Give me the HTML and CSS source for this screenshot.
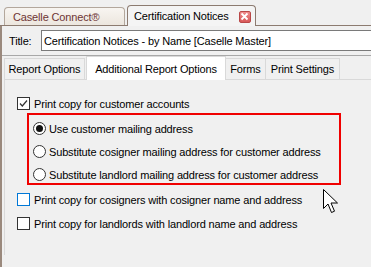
FILE: index.html
```html
<!DOCTYPE html>
<html lang="en">
<head>
  <meta charset="UTF-8" />
  <title>Certification Notices</title>
  <link rel="stylesheet" href="styles.css">
</head>
<body>
  <div class="doc-tabs">
    <div class="doc-tab">Caselle Connect®</div>
    <div class="doc-tab active">
      Certification Notices
      <span class="close-btn">
        <svg width="9" height="9" viewBox="0 0 9 9"><path d="M1.5 1.5 L7.5 7.5 M7.5 1.5 L1.5 7.5" stroke="#fff" stroke-width="1.8" /></svg>
      </span>
    </div>
  </div>

  <div class="doc-body">
    <div class="title-row">
      <span class="title-label">Title:</span>
      <div class="title-input">Certification Notices - by Name [Caselle Master]</div>
    </div>

    <div class="sub-tabs">
      <div class="sub-tab tab-report">Report Options</div>
      <div class="sub-tab tab-additional active">Additional Report Options</div>
      <div class="sub-tab tab-forms">Forms</div>
      <div class="sub-tab tab-print">Print Settings</div>
    </div>

    <div class="tab-panel">
      <div class="option-row">
        <span class="checkbox">
          <svg width="11" height="11" viewBox="0 0 11 11"><path d="M2 5.5 L4.3 8 L9 2.5" fill="none" stroke="#333" stroke-width="1.2" /></svg>
        </span>
        Print copy for customer accounts
      </div>

      <div class="address-group">
        <div class="option-row"><span class="radio checked"></span>Use customer mailing address</div>
        <div class="option-row"><span class="radio"></span>Substitute cosigner mailing address for customer address</div>
        <div class="option-row"><span class="radio"></span>Substitute landlord mailing address for customer address</div>
      </div>

      <div class="option-row spaced"><span class="checkbox hover"></span>Print copy for cosigners with cosigner name and address</div>
      <div class="option-row spaced"><span class="checkbox"></span>Print copy for landlords with landlord name and address</div>
    </div>
  </div>

  <!-- mouse pointer over the dialog -->
  <svg class="pointer" width="16" height="25" viewBox="0 0 16 25">
    <path d="M0.5 0.5 L0.5 19.5 L5 15 L8.5 23.5 L11.5 22.2 L8 14 L14.5 14 Z" fill="#fff" stroke="#000" stroke-width="1" stroke-linejoin="miter" />
  </svg>
</body>
</html>
```

FILE: styles.css
```css
body {
  margin: 0;
  background: #f0f0f0;
  font-family: 'Liberation Sans', Arial, sans-serif;
  font-size: 11px;
  letter-spacing: -0.15px;
  color: #000;
  overflow: hidden;
  position: relative;
  height: 267px;
  white-space: nowrap;
}

/* document tabs */
.doc-tabs {
  height: 25px;
  display: flex;
  align-items: flex-end;
  padding-left: 4px;
  border-bottom: 1px solid #8c7b70;
}

.doc-tab {
  box-sizing: border-box;
  height: 18px;
  width: 121px;
  padding-left: 8px;
  display: flex;
  align-items: center;
  border: 1px solid #b3a79c;
  border-bottom: none;
  border-radius: 4px 4px 0 0;
  background: linear-gradient(#f8f5f1, #ece6de);
  color: #6e3434;
}

.doc-tab.active {
  height: 21px;
  width: 129px;
  margin-left: 2px;
  margin-bottom: -1px;
  padding-left: 6px;
  border-color: #8c7b70;
  background: #f4f4f4;
  color: #000;
}

.close-btn {
  flex-shrink: 0;
  box-sizing: border-box;
  width: 12px;
  height: 12px;
  margin-left: 10px;
  margin-top: 1px;
  display: flex;
  align-items: center;
  justify-content: center;
  border: 1px solid #b94848;
  border-radius: 2px;
  background: linear-gradient(#ef8c8c, #d85858);
}

/* document body */
.doc-body {
  border-left: 2px solid #9a897d;
  height: 241px;
}

.title-row {
  height: 29px;
  display: flex;
  align-items: center;
  padding-left: 7px;
}

.title-label {
  width: 32px;
}

.title-input {
  flex: 1;
  box-sizing: border-box;
  height: 21px;
  padding-left: 2px;
  display: flex;
  align-items: center;
  background: #fff;
  border: 1px solid #7a7a7a;
  border-right: none;
}

.sub-tabs {
  height: 23px;
  display: flex;
  align-items: flex-end;
  padding-left: 2px;
  border-top: 1px solid #a8a8a8;
}

.sub-tab {
  box-sizing: border-box;
  height: 21px;
  display: flex;
  align-items: center;
  justify-content: center;
  border: 1px solid #d9d9d9;
  border-bottom: none;
  background: #f0f0f0;
}

.sub-tab + .sub-tab {
  margin-left: -1px;
}

.tab-report { width: 81px; }
.tab-additional { width: 140px; margin-left: 1px !important; }
.tab-forms { width: 41px; }
.tab-print { width: 75px; }

.sub-tab.active {
  height: 24px;
  margin-bottom: -1px;
  background: #fff;
  position: relative;
  z-index: 1;
}

.tab-panel {
  margin-left: 2px;
  height: 160px;
  border-top: 1px solid #d9d9d9;
  border-left: 1px solid #d9d9d9;
  padding: 15px 0 0 12px;
  display: flex;
  flex-direction: column;
}

.option-row {
  height: 17px;
  display: flex;
  align-items: center;
}

.option-row.spaced {
  margin-top: 6px;
}

.option-row.spaced + .option-row.spaced {
  margin-top: 7px;
}

.checkbox {
  flex-shrink: 0;
  box-sizing: border-box;
  width: 13px;
  height: 13px;
  margin-right: 4px;
  display: flex;
  align-items: center;
  justify-content: center;
  border: 1px solid #333;
  background: #fff;
}

.checkbox.hover {
  border-color: #0078d7;
}

.address-group {
  box-sizing: border-box;
  width: 314px;
  height: 72px;
  margin: 1px 0 0 10px;
  padding: 5px 0 0 4px;
  border: 2px solid #f00000;
  display: flex;
  flex-direction: column;
  gap: 6px;
}

.radio {
  flex-shrink: 0;
  box-sizing: border-box;
  width: 13px;
  height: 13px;
  margin-right: 3px;
  border: 1px solid #333;
  border-radius: 50%;
  background: #fff;
  display: flex;
  align-items: center;
  justify-content: center;
}

.radio.checked::after {
  content: "";
  width: 7px;
  height: 7px;
  border-radius: 50%;
  background: #111;
}

.pointer {
  position: absolute;
  left: 323px;
  top: 189px;
}
```
